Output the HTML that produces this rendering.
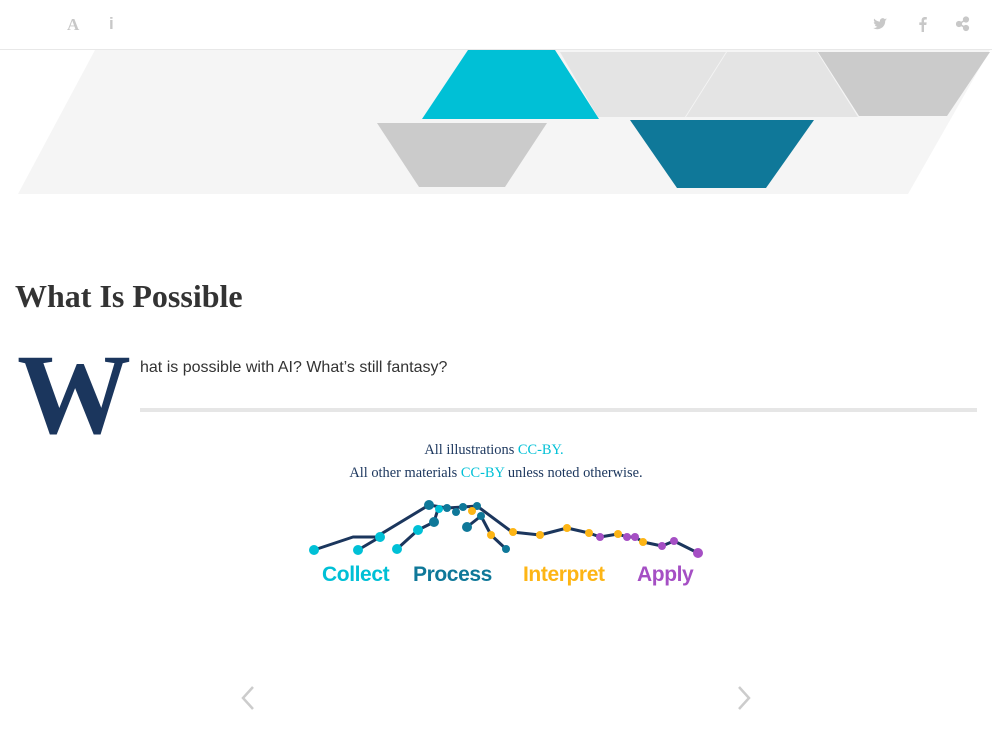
<!DOCTYPE html>
<html><head><meta charset="utf-8"><style>
html,body{margin:0;padding:0;background:#fff;width:992px;height:744px;overflow:hidden;position:relative}
.hdr{position:absolute;left:0;top:0;width:992px;height:49px;border-bottom:1px solid #e8e8e8}
.t{position:absolute;white-space:nowrap}
</style></head><body>
<div class="hdr"></div>
<div class="t" style="left:67px;top:15px;font:bold 17px 'Liberation Serif',serif;color:#c8c8c8">A</div>
<div class="t" style="left:109px;top:14px;font:bold 17px 'Liberation Sans',sans-serif;color:#c8c8c8">i</div>
<svg style="position:absolute;left:872px;top:16px" width="16" height="16" viewBox="0 0 16 16"><path d="M15 3.5c-.5.2-1 .4-1.6.4.6-.3 1-.9 1.2-1.5-.5.3-1.1.5-1.8.7A2.8 2.8 0 0 0 8 5.6 7.9 7.9 0 0 1 2.2 2.6a2.8 2.8 0 0 0 .9 3.7c-.5 0-.9-.1-1.3-.3 0 1.4 1 2.5 2.200 2.700-.4.1-.9.2-1.3.1.4 1.1 1.4 1.9 2.6 1.9A5.6 5.6 0 0 1 1 11.9 7.9 7.9 0 0 0 13.2 5v-.4c.7-.3 1.3-.8 1.8-1.1z" fill="#c8c8c8"/></svg>
<svg style="position:absolute;left:918px;top:16px" width="10" height="16" viewBox="0 0 10 16"><path d="M6 16V9h2.3l.4-2.6H6V4.8c0-.8.3-1.3 1.4-1.3h1.4V1.1C8.5 1 7.7 1 6.9 1 4.9 1 3.6 2.2 3.6 4.4v2H1.3V9h2.3v7z" fill="#c8c8c8"/></svg>
<svg style="position:absolute;left:956px;top:16px" width="14" height="16" viewBox="0 0 14 16"><g fill="#c8c8c8" stroke="#c8c8c8" stroke-width="1.6"><circle cx="10" cy="3.5" r="2.3"/><circle cx="3" cy="8" r="2.3"/><circle cx="10" cy="12" r="2.3"/><path d="M10 3.5 3 8l7 4" fill="none"/></g></svg>

<svg style="position:absolute;left:0;top:50px" width="992" height="150" viewBox="0 50 992 150">
<polygon points="95,50 990,50 908,194 18,194" fill="#f5f5f5"/>
<polygon points="468,50 555,50 599,119 422,119" fill="#00c0d6"/>
<polygon points="560,52 726,52 685,117 598,117" fill="#e4e4e4"/>
<polygon points="727,52 817,52 858,117 686,117" fill="#e4e4e4"/>
<polygon points="818,52 990,52 947,116 859,116" fill="#cbcbcb"/>
<polygon points="377,123 547,123 505,187 419,187" fill="#cbcbcb"/>
<polygon points="630,120 814,120 766,188 677,188" fill="#0f7899"/>
</svg>

<div class="t" style="left:15px;top:278px;font:bold 32px 'Liberation Serif',serif;color:#333">What Is Possible</div>
<div class="t" style="left:17px;top:338px;font:bold 114px/1 'Liberation Serif',serif;color:#1b365d">W</div>
<div class="t" style="left:140px;top:359px;font:16px 'Liberation Sans',sans-serif;color:#333">hat is possible with AI? What’s still fantasy?</div>
<div style="position:absolute;left:140px;top:408px;width:837px;height:4px;background:#e6e6e6"></div>
<div class="t" style="left:0;width:988px;text-align:center;top:442px;font:14.4px 'Liberation Serif',serif;color:#1b365d">All illustrations <span style="color:#00c0d6">CC-BY.</span></div>
<div class="t" style="left:0;width:992px;text-align:center;top:465px;font:14.4px 'Liberation Serif',serif;color:#1b365d">All other materials <span style="color:#00c0d6">CC-BY</span> unless noted otherwise.</div>

<svg style="position:absolute;left:0;top:0" width="992" height="600">
<g fill="none" stroke="#1b365d" stroke-width="3" stroke-linejoin="round">
<polyline points="314,550 353,537 376,537 429,505 447,508 463,507 477,506 512,532 540,535 567,528 589,533 600,537 618,534 627,537 635,537 643,542 662,546 674,541 698,553"/>
<polyline points="358,550 380,537"/>
<polyline points="397,549 418,530 434,522 438,509"/>
<polyline points="467,527 481,516 491,535 506,549"/>
</g>
<g fill="#00c0d6"><circle cx="314" cy="550" r="5"/><circle cx="358" cy="550" r="5"/><circle cx="380" cy="537" r="5"/><circle cx="397" cy="549" r="5"/><circle cx="418" cy="530" r="5"/><circle cx="439" cy="509" r="4"/></g>
<g fill="#0f7899"><circle cx="429" cy="505" r="5"/><circle cx="434" cy="522" r="5"/><circle cx="447" cy="508" r="4"/><circle cx="456" cy="512" r="4"/><circle cx="463" cy="507" r="4"/><circle cx="477" cy="506" r="4"/><circle cx="467" cy="527" r="5"/><circle cx="481" cy="516" r="4"/><circle cx="506" cy="549" r="4"/></g>
<g fill="#fdb515"><circle cx="472" cy="511" r="4"/><circle cx="491" cy="535" r="4"/><circle cx="513" cy="532" r="4"/><circle cx="540" cy="535" r="4"/><circle cx="567" cy="528" r="4"/><circle cx="589" cy="533" r="4"/><circle cx="618" cy="534" r="4"/><circle cx="643" cy="542" r="4"/></g>
<g fill="#a54fc4"><circle cx="600" cy="537" r="4"/><circle cx="627" cy="537" r="4"/><circle cx="635" cy="537" r="4"/><circle cx="662" cy="546" r="4"/><circle cx="674" cy="541" r="4"/><circle cx="698" cy="553" r="5"/></g>
<g font-family="'Liberation Sans',sans-serif" font-weight="bold" font-size="21" letter-spacing="-0.4">
<text x="322" y="581" fill="#00c0d6">Collect</text>
<text x="413" y="581" fill="#0f7899">Process</text>
<text x="523" y="581" fill="#fdb515">Interpret</text>
<text x="637" y="581" fill="#a54fc4">Apply</text>
</g>
</svg>

<svg style="position:absolute;left:240px;top:686px" width="16" height="24"><polyline points="13,1 3,12 13,23" fill="none" stroke="#cccccc" stroke-width="2.5"/></svg>
<svg style="position:absolute;left:736px;top:686px" width="16" height="24"><polyline points="3,1 13,12 3,23" fill="none" stroke="#cccccc" stroke-width="2.5"/></svg>
</body></html>
